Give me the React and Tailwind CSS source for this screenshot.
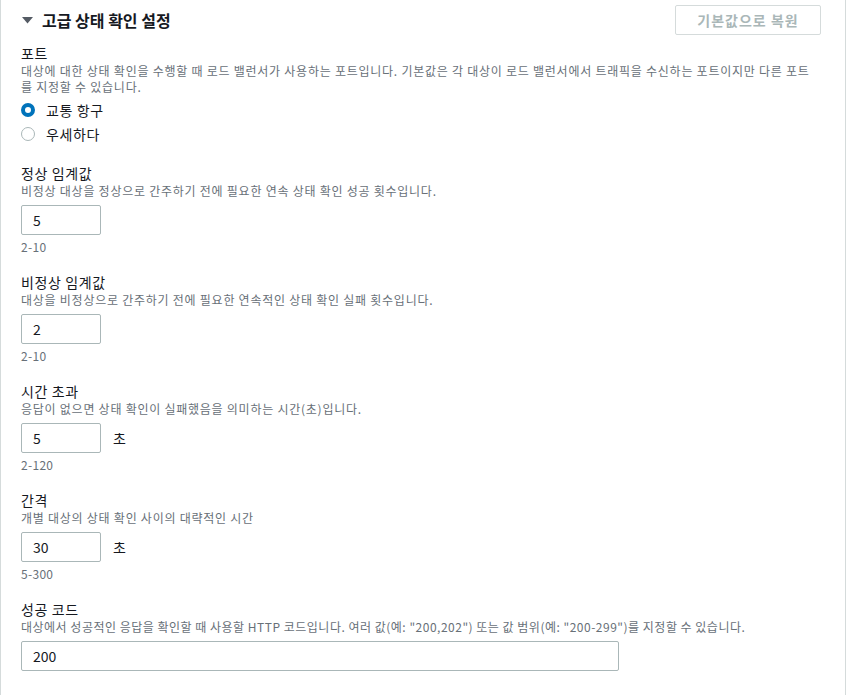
import { useState } from 'react';

const fields = [
  {
    label: '정상 임계값',
    desc: '비정상 대상을 정상으로 간주하기 전에 필요한 연속 상태 확인 성공 횟수입니다.',
    value: '5',
    hint: '2-10',
  },
  {
    label: '비정상 임계값',
    desc: '대상을 비정상으로 간주하기 전에 필요한 연속적인 상태 확인 실패 횟수입니다.',
    value: '2',
    hint: '2-10',
  },
  {
    label: '시간 초과',
    desc: '응답이 없으면 상태 확인이 실패했음을 의미하는 시간(초)입니다.',
    value: '5',
    unit: '초',
    hint: '2-120',
  },
  {
    label: '간격',
    desc: '개별 대상의 상태 확인 사이의 대략적인 시간',
    value: '30',
    unit: '초',
    hint: '5-300',
  },
];

function Radio({ checked, label, onClick }) {
  return (
    <label className="flex items-center h-6 gap-[11px] cursor-pointer" onClick={onClick}>
      {checked ? (
        <span className="w-[14px] h-[14px] rounded-full border-[4px] border-[#0073bb] bg-white" />
      ) : (
        <span className="w-[14px] h-[14px] rounded-full border border-[#aab7b8] bg-white" />
      )}
      <span className="text-sm leading-5 tracking-[0.6px] text-[#16191f]">{label}</span>
    </label>
  );
}

function NumberField({ label, desc, value, unit, hint }) {
  return (
    <div className="mt-[17px]">
      <div className="text-sm leading-5 tracking-[0.6px] text-[#16191f]">{label}</div>
      <div className="text-xs leading-4 tracking-[0.75px] text-[#687078]">{desc}</div>
      <div className="mt-[6px] flex items-center gap-3">
        <input
          defaultValue={value}
          className="w-20 h-[30px] px-[11px] border border-[#aab7b8] rounded-[2px] text-sm text-[#16191f] outline-none"
        />
        {unit && <span className="text-sm text-[#16191f]">{unit}</span>}
      </div>
      <div className="mt-1 text-xs leading-4 tracking-[0.3px] text-[#687078]">{hint}</div>
    </div>
  );
}

export default function App() {
  const [port, setPort] = useState('traffic');

  return (
    <div
      className="w-[846px] h-[695px] bg-white border-l border-r border-[#d5dbdb] pl-5 pr-6 overflow-hidden"
      style={{ fontFamily: '"Noto Sans CJK KR", "Noto Sans", sans-serif' }}
    >
      {/* header */}
      <div className="pt-[5px] h-[35px] flex items-center justify-between">
        <div className="flex items-center">
          <svg width="12" height="8" viewBox="0 0 12 8" className="ml-[1px]">
            <path d="M0 1h11L5.5 7.5z" fill="#545b64" />
          </svg>
          <span className="ml-[8px] text-base font-bold text-[#16191f]">고급 상태 확인 설정</span>
        </div>
        <button className="w-[146px] h-[30px] border border-[#d5dbdb] rounded-[2px] text-sm font-bold tracking-[1px] text-[#aab7b8] bg-white">
          기본값으로 복원
        </button>
      </div>

      {/* port */}
      <div className="mt-2">
        <div className="text-sm leading-5 tracking-[0.6px] text-[#16191f]">포트</div>
        <div className="text-xs leading-4 tracking-[0.75px] text-[#687078]">
          대상에 대한 상태 확인을 수행할 때 로드 밸런서가 사용하는 포트입니다. 기본값은 각 대상이 로드 밸런서에서 트래픽을 수신하는 포트이지만 다른 포트를 지정할 수 있습니다.
        </div>
        <div className="mt-[3px]">
          <Radio checked={port === 'traffic'} label="교통 항구" onClick={() => setPort('traffic')} />
          <Radio checked={port === 'override'} label="우세하다" onClick={() => setPort('override')} />
        </div>
      </div>

      {fields.map((f) => (
        <NumberField key={f.label} {...f} />
      ))}

      {/* success codes */}
      <div className="mt-[17px]">
        <div className="text-sm leading-5 tracking-[0.6px] text-[#16191f]">성공 코드</div>
        <div className="text-xs leading-4 tracking-[0.5px] text-[#687078]">
          대상에서 성공적인 응답을 확인할 때 사용할 HTTP 코드입니다. 여러 값(예: "200,202") 또는 값 범위(예: "200-299")를 지정할 수 있습니다.
        </div>
        <input
          defaultValue="200"
          className="mt-[6px] block w-[598px] h-[30px] px-[11px] border border-[#aab7b8] rounded-[2px] text-sm text-[#16191f] outline-none"
        />
      </div>
    </div>
  );
}
